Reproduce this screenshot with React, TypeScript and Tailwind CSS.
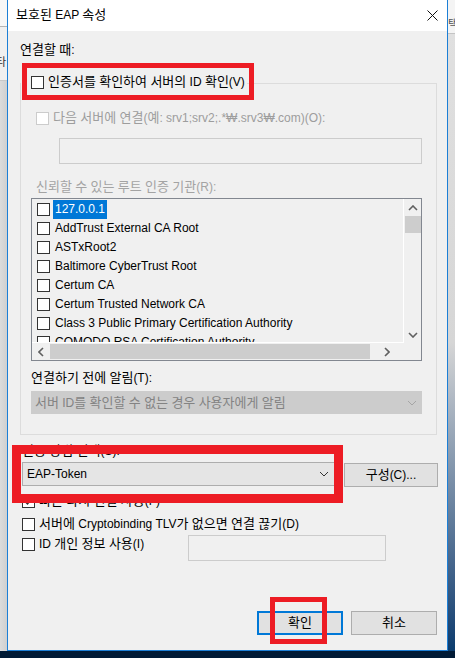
import React from "react"

const certs = [
  "127.0.0.1",
  "AddTrust External CA Root",
  "ASTxRoot2",
  "Baltimore CyberTrust Root",
  "Certum CA",
  "Certum Trusted Network CA",
  "Class 3 Public Primary Certification Authority",
  "COMODO RSA Certification Authority",
]

// Hangul runs are drawn a pixel larger so they match Malgun Gothic's size
function T({ s }: { s: string }) {
  const parts = s.split(/([\uAC00-\uD7A3]+)/)
  return (
    <>
      {parts.map((p, i) =>
        /[\uAC00-\uD7A3]/.test(p) ? (
          <span key={i} className="text-[13px]">
            {p}
          </span>
        ) : (
          <React.Fragment key={i}>{p}</React.Fragment>
        )
      )}
    </>
  )
}

function Check({ checked, disabled }: { checked?: boolean; disabled?: boolean }) {
  return (
    <span
      className={`flex h-[13px] w-[13px] shrink-0 items-center justify-center border bg-white ${
        disabled ? "border-[#cccccc]" : "border-[#333333]"
      }`}
    >
      {checked && (
        <svg width="9" height="9" viewBox="0 0 9 9">
          <path d="M1 4.5 L3.5 7 L8 1.5" fill="none" stroke="#333" strokeWidth="1.4" />
        </svg>
      )}
    </span>
  )
}

function Chevron({ dir, color, bold }: { dir: "up" | "down" | "left" | "right"; color: string; bold?: boolean }) {
  const paths = {
    down: "M1 1 L5 5 L9 1",
    up: "M1 5 L5 1 L9 5",
    left: "M5 1 L1 5 L5 9",
    right: "M1 1 L5 5 L1 9",
  }
  const vertical = dir === "up" || dir === "down"
  return (
    <svg width={vertical ? 10 : 6} height={vertical ? 6 : 10} viewBox={vertical ? "0 0 10 6" : "0 0 6 10"}>
      <path d={paths[dir]} fill="none" stroke={color} strokeWidth={bold ? 1.6 : 1} />
    </svg>
  )
}

function RedBox({ className }: { className: string }) {
  return <div className={`pointer-events-none absolute border-[#ed1c24] ${className}`} />
}

export default function App() {
  return (
    <div className="relative flex h-[658px] w-[455px] flex-col overflow-hidden bg-[#001a35] font-['Liberation_Sans','Noto_Sans_CJK_KR',sans-serif] text-[12px] leading-[16px] text-black">
      <div className="flex h-[651px]">
        {/* background window, left */}
        <div className="flex w-[7px] flex-col bg-[#e4e4e4]">
          <div className="h-[26px] bg-[#f7f7f7]" />
          <div className="h-px bg-[#b4b4b4]" />
          <div className="h-[53px] overflow-hidden bg-[#f0f0f0] pt-[28px] text-[11px] leading-[14px] text-[#333]">
            <span className="-ml-[4px] block">타</span>
          </div>
          <div className="h-px bg-[#c8c8c8]" />
          <div className="flex-1 bg-gradient-to-r from-[#dcdcdc] to-[#d0d0d0]" />
        </div>

        {/* dialog */}
        <div className="flex w-[441px] flex-col border-x border-b border-[#1c7fd6] bg-[#f0f0f0]">
          <div className="flex h-[31px] items-center justify-between bg-white pl-[8px] pr-[9px]">
            <span className="mt-[-1px]">
              <T s="보호된 EAP 속성" />
            </span>
            <svg width="11" height="11" viewBox="0 0 11 11">
              <path d="M0.5 0.5 L10.5 10.5 M10.5 0.5 L0.5 10.5" stroke="#111" strokeWidth="1" />
            </svg>
          </div>

          <div className="flex flex-1 flex-col pl-[12px]">
            <div className="mt-[11px]">
              <T s="연결할 때:" />
            </div>

            <div className="mt-[25px] w-[417px] border border-[#dcdcdc]">
              <div className="-mt-[10px] flex w-fit items-center gap-[4px] bg-[#f0f0f0] pl-[10px] pr-[2px]">
                <Check />
                <span>
                  <T s="인증서를 확인하여 서버의 ID 확인(V)" />
                </span>
              </div>

              <div className="mt-[20px] flex items-center gap-[4px] pl-[15px] text-[#9d9d9d]">
                <Check disabled />
                <span>
                  <T s="다음 서버에 연결(예: srv1;srv2;.*₩.srv3₩.com)(O):" />
                </span>
              </div>

              <div className="ml-[38px] mt-[12px] h-[26px] w-[363px] border border-[#cccccc] bg-[#f0f0f0]" />

              <div className="ml-[15px] mt-[15px] text-[#a3a3a3]">
                <T s="신뢰할 수 있는 루트 인증 기관(R):" />
              </div>

              <div className="ml-[10px] mt-[3px] flex h-[163px] w-[391px] flex-col border border-[#828790] bg-[#f0f0f0]">
                <div className="flex h-[144px]">
                  <div className="flex-1 overflow-hidden border-b border-r border-white pt-[1px]">
                    {certs.map((c, i) => (
                      <div key={c} className="flex h-[19px] items-center whitespace-nowrap pl-[5px]">
                        <Check />
                        <span
                          className={`ml-[3px] px-[2px] leading-[19px] ${
                            i === 0 ? "bg-[#0078d7] text-white" : ""
                          }`}
                        >
                          {c}
                        </span>
                      </div>
                    ))}
                  </div>
                  <div className="flex w-[17px] flex-col items-center">
                    <div className="flex h-[17px] items-center justify-center">
                      <Chevron dir="up" color="#606060" bold />
                    </div>
                    <div className="h-[17px] w-[16px] bg-[#cdcdcd]" />
                    <div className="flex-1" />
                    <div className="flex h-[17px] items-center justify-center">
                      <Chevron dir="down" color="#606060" bold />
                    </div>
                  </div>
                </div>
                <div className="flex h-[17px]">
                  <div className="flex flex-1 items-center">
                    <div className="flex w-[17px] justify-center">
                      <Chevron dir="left" color="#606060" bold />
                    </div>
                    <div className="ml-[1px] h-[15px] w-[320px] bg-[#cdcdcd]" />
                    <div className="flex flex-1 justify-center">
                      <Chevron dir="right" color="#606060" bold />
                    </div>
                  </div>
                  <div className="w-[17px]" />
                </div>
              </div>

              <div className="ml-[10px] mt-[9px]">
                <T s="연결하기 전에 알림(T):" />
              </div>

              <div className="ml-[10px] mt-[5px] flex h-[23px] w-[391px] items-center justify-between bg-[#cccccc] pl-[4px] pr-[5px] text-[#838383]">
                <span>
                  <T s="서버 ID를 확인할 수 없는 경우 사용자에게 알림" />
                </span>
                <Chevron dir="down" color="#a5a5a5" />
              </div>

              <div className="h-[20px]" />
            </div>

            <div className="mt-[8px] pl-[2px]">
              <T s="인증 방법 선택(S):" />
            </div>

            <div className="mt-[3px] flex items-start gap-[9px] pl-[2px]">
              <div className="flex h-[24px] w-[313px] items-center justify-between border border-[#adadad] bg-[#e5e5e5] pl-[4px] pr-[5px]">
                <span>EAP-Token</span>
                <Chevron dir="down" color="#333" />
              </div>
              <div className="mt-px flex h-[24px] w-[94px] items-center justify-center border border-[#adadad] bg-[#e1e1e1]">
                <T s="구성(C)..." />
              </div>
            </div>

            <div className="mt-[6px] flex h-[16px] items-center gap-[4px] pl-[2px]">
              <Check checked />
              <span>
                <T s="빠른 다시 연결 사용(F)" />
              </span>
            </div>

            <div className="mt-[7px] flex h-[16px] items-center gap-[4px] pl-[2px]">
              <Check />
              <span>
                <T s="서버에 Cryptobinding TLV가 없으면 연결 끊기(D)" />
              </span>
            </div>

            <div className="mt-[3px] flex items-start pl-[2px]">
              <div className="mt-[1px] flex h-[16px] w-[166px] items-center gap-[4px]">
                <Check />
                <span>
                  <T s="ID 개인 정보 사용(I)" />
                </span>
              </div>
              <div className="h-[26px] w-[198px] border border-[#cccccc] bg-[#f0f0f0]" />
            </div>

            <div className="mb-[15px] mt-auto flex justify-end gap-[8px] pr-[10px]">
              <div className="flex h-[24px] w-[86px] items-center justify-center border-2 border-[#0078d7] bg-[#e1e1e1]">
                <T s="확인" />
              </div>
              <div className="flex h-[24px] w-[86px] items-center justify-center border border-[#adadad] bg-[#e1e1e1]">
                <T s="취소" />
              </div>
            </div>
          </div>
        </div>

        {/* background window, right */}
        <div className="flex w-[7px] flex-col bg-[#e2e2e2]">
          <div className="h-[33px] overflow-hidden bg-[#f4f4f4] pt-[17px] text-[11px] leading-[14px] text-[#555]">
            <span className="block">택</span>
          </div>
          <div className="h-px bg-[#c4c4c4]" />
          <div className="flex-1 bg-gradient-to-b from-[#e0e0e0] via-[#d6d6d6] to-[#0a3c6e]" />
        </div>
      </div>

      <div className="h-[7px] bg-[#001a35]" />

      <RedBox className="left-[22px] top-[63px] h-[37px] w-[232px] border-[5px]" />
      <RedBox className="left-[12px] top-[445px] h-[58px] w-[331px] border-[9px]" />
      <RedBox className="left-[270px] top-[597px] h-[47px] w-[57px] border-[5px]" />
    </div>
  )
}
